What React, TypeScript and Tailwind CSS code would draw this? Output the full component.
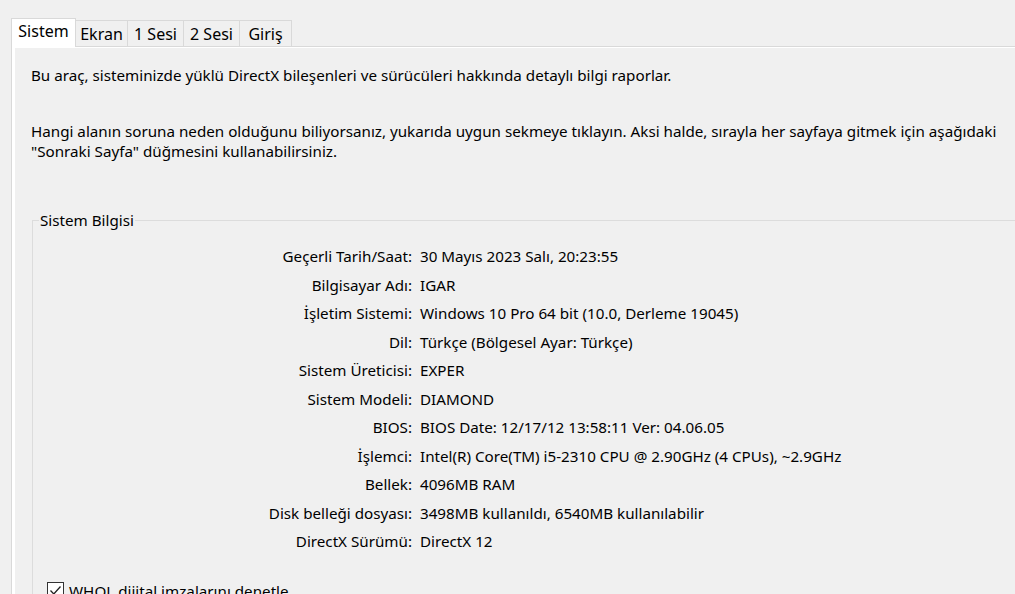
import React from "react";

const rows: [string, string][] = [
  ["Geçerli Tarih/Saat:", "30 Mayıs 2023 Salı, 20:23:55"],
  ["Bilgisayar Adı:", "IGAR"],
  ["İşletim Sistemi:", "Windows 10 Pro 64 bit (10.0, Derleme 19045)"],
  ["Dil:", "Türkçe (Bölgesel Ayar: Türkçe)"],
  ["Sistem Üreticisi:", "EXPER"],
  ["Sistem Modeli:", "DIAMOND"],
  ["BIOS:", "BIOS Date: 12/17/12 13:58:11 Ver: 04.06.05"],
  ["İşlemci:", "Intel(R) Core(TM) i5-2310 CPU @ 2.90GHz (4 CPUs), ~2.9GHz"],
  ["Bellek:", "4096MB RAM"],
  ["Disk belleği dosyası:", "3498MB kullanıldı, 6540MB kullanılabilir"],
  ["DirectX Sürümü:", "DirectX 12"],
];

const tabs = ["Ekran", "1 Sesi", "2 Sesi", "Giriş"];
const tabW = [52, 56, 56, 52];

export default function App() {
  return (
    <div
      className="w-[1015px] h-[594px] overflow-hidden bg-[#f0f0f0] text-black pt-[18px] pl-[11px]"
      style={{ fontFamily: '"Noto Sans", "Open Sans", sans-serif' }}
    >
      <div className="flex items-end h-[28px] text-[16px] leading-[20px]">
        <div className="relative z-10 h-[29px] w-[65px] border border-b-0 border-[#d9d9d9] bg-white flex items-start justify-center pt-[2px] -mb-px">
          Sistem
        </div>
        {tabs.map((t, i) => (
          <div
            key={t}
            style={{ width: tabW[i] }}
            className="h-[26px] border-t border-r border-[#d9d9d9] bg-[#f0f0f0] flex items-center justify-center"
          >
            {t}
          </div>
        ))}
      </div>
      <div className="w-[1100px] h-[600px] border-l border-t border-[#d9d9d9] bg-white pl-[3px] pt-px">
        <div className="h-full bg-[#f0f0f0] pl-[16px] pt-[17px] text-[15.2px] leading-[20px]">
          <p>Bu araç, sisteminizde yüklü DirectX bileşenleri ve sürücüleri hakkında detaylı bilgi raporlar.</p>
          <p className="mt-[36px] w-[970px]">
            Hangi alanın soruna neden olduğunu biliyorsanız, yukarıda uygun sekmeye tıklayın. Aksi halde, sırayla her sayfaya gitmek için aşağıdaki "Sonraki Sayfa" düğmesini kullanabilirsiniz.
          </p>
          <fieldset className="mt-[49px] ml-px border border-[#dcdcdc] h-[500px]">
            <legend className="ml-[6px] px-px leading-[20px]">Sistem Bilgisi</legend>
            <div className="mt-[12px] grid grid-cols-[379px_1fr] gap-x-[8px]">
              {rows.map(([k, v]) => (
                <React.Fragment key={k}>
                  <div className="text-right h-[28.5px] flex items-center justify-end">{k}</div>
                  <div className="h-[28.5px] flex items-center">{v}</div>
                </React.Fragment>
              ))}
            </div>
            <div className="mt-[25px] ml-[14px] flex items-center gap-[5px]">
              <div className="w-[17px] h-[17px] border border-[#333] bg-white flex items-center justify-center">
                <svg width="15" height="15" viewBox="0 0 15 15">
                  <path d="M2.5 7.5 L5.8 11 L12.5 3.5" fill="none" stroke="#222" strokeWidth="1.3" />
                </svg>
              </div>
              <span>WHQL dijital imzalarını denetle</span>
            </div>
          </fieldset>
        </div>
      </div>
    </div>
  );
}
